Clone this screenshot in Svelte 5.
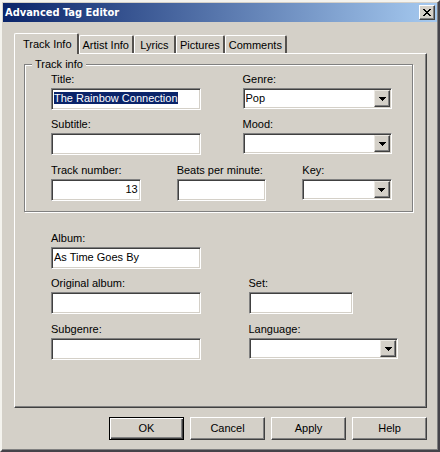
<script lang="ts">
	import { onMount } from 'svelte';

	const tabs = ['Track Info', 'Artist Info', 'Lyrics', 'Pictures', 'Comments'];

	let activeTab = $state('Track Info');
	let title = $state('The Rainbow Connection');
	let subtitle = $state('');
	let genre = $state('Pop');
	let mood = $state('');
	let trackNumber = $state('13');
	let bpm = $state('');
	let key = $state('');
	let album = $state('As Time Goes By');
	let originalAlbum = $state('');
	let set = $state('');
	let subgenre = $state('');
	let language = $state('');

	let titleInput: HTMLInputElement;

	onMount(() => {
		titleInput.focus();
		titleInput.select();
	});
</script>

{#snippet arrow()}
	<span class="arrow" aria-hidden="true">
		<svg width="7" height="4" viewBox="0 0 7 4" shape-rendering="crispEdges">
			<path d="M0 0h7v1h-1v1h-1v1h-1v1h-1v-1h-1v-1h-1v-1h-1z" />
		</svg>
	</span>
{/snippet}

<div class="window" role="dialog" aria-labelledby="window-title">
	<header class="title-bar">
		<h1 id="window-title">Advanced Tag Editor</h1>
		<button type="button" class="close" aria-label="Close">
			<svg width="8" height="7" viewBox="0 0 8 7" shape-rendering="crispEdges">
				<path
					d="M0 0h2v1h1v1h2v-1h1v-1h2v1h-1v1h-1v1h-1v1h1v1h1v1h1v1h-2v-1h-1v-1h-2v1h-1v1h-2v-1h1v-1h1v-1h1v-1h-1v-1h-1v-1h-1z"
				/>
			</svg>
		</button>
	</header>

	<form class="content" onsubmit={(event) => event.preventDefault()}>
		<div class="tabs" role="tablist">
			{#each tabs as tab}
				<button
					type="button"
					role="tab"
					class="tab"
					class:active={tab === activeTab}
					aria-selected={tab === activeTab}
					onclick={() => (activeTab = tab)}>{tab}</button
				>
			{/each}
		</div>

		<div class="panel" role="tabpanel">
			<fieldset>
				<legend>Track info</legend>
				<div class="row halves">
					<div class="field">
						<label for="title">Title:</label>
						<input id="title" type="text" bind:value={title} bind:this={titleInput} />
					</div>
					<div class="field">
						<label for="genre">Genre:</label>
						<div class="combo">
							<select id="genre" bind:value={genre}>
								<option>Pop</option>
							</select>
							{@render arrow()}
						</div>
					</div>
				</div>
				<div class="row halves">
					<div class="field">
						<label for="subtitle">Subtitle:</label>
						<input id="subtitle" type="text" bind:value={subtitle} />
					</div>
					<div class="field">
						<label for="mood">Mood:</label>
						<div class="combo">
							<select id="mood" bind:value={mood}><option value=""></option></select>
							{@render arrow()}
						</div>
					</div>
				</div>
				<div class="row thirds">
					<div class="field">
						<label for="track">Track number:</label>
						<input id="track" class="number" type="text" bind:value={trackNumber} />
					</div>
					<div class="field">
						<label for="bpm">Beats per minute:</label>
						<input id="bpm" class="number" type="text" bind:value={bpm} />
					</div>
					<div class="field">
						<label for="key">Key:</label>
						<div class="combo">
							<select id="key" bind:value={key}><option value=""></option></select>
							{@render arrow()}
						</div>
					</div>
				</div>
			</fieldset>

			<div class="album">
				<div class="row wide">
					<div class="field">
						<label for="album">Album:</label>
						<input id="album" type="text" bind:value={album} />
					</div>
				</div>
				<div class="row wide">
					<div class="field">
						<label for="original-album">Original album:</label>
						<input id="original-album" type="text" bind:value={originalAlbum} />
					</div>
					<div class="field short">
						<label for="set">Set:</label>
						<input id="set" type="text" bind:value={set} />
					</div>
				</div>
				<div class="row wide">
					<div class="field">
						<label for="subgenre">Subgenre:</label>
						<input id="subgenre" type="text" bind:value={subgenre} />
					</div>
					<div class="field">
						<label for="language">Language:</label>
						<div class="combo">
							<select id="language" bind:value={language}><option value=""></option></select>
							{@render arrow()}
						</div>
					</div>
				</div>
			</div>
		</div>

		<div class="actions">
			<button type="submit" class="action default">OK</button>
			<button type="button" class="action">Cancel</button>
			<button type="button" class="action">Apply</button>
			<button type="button" class="action">Help</button>
		</div>
	</form>
</div>

<style>
	:global(body) {
		background-color: #d4d0c8;
	}

	.window,
	.window * {
		box-sizing: border-box;
	}

	.window {
		min-height: 100vh;
		padding: 1px;
		border: 2px solid;
		border-color: #f4f3ee #45434a #45434a #f4f3ee;
		background-color: #d4d0c8;
		box-shadow: inset -1px -1px #808080;
		color: #000;
		font-family: 'Liberation Sans', Arial, sans-serif;
		font-size: 11px;
		line-height: 13px;
	}

	button,
	input,
	select {
		margin: 0;
		border-radius: 0;
		color: inherit;
		font: inherit;
		outline: none;
	}

	.title-bar {
		display: flex;
		align-items: center;
		justify-content: space-between;
		height: 19px;
		padding: 0 2px;
		background: linear-gradient(to right, #0a246a, #a6caf0);
	}

	h1 {
		margin: 0;
		color: #fff;
		font-family: 'DejaVu Sans Condensed', Tahoma, sans-serif;
		font-size: 11px;
		font-weight: 700;
	}

	.close {
		display: flex;
		align-items: center;
		justify-content: center;
		width: 16px;
		height: 15px;
		padding: 0;
		border: 1px solid;
		border-color: #fff #404040 #404040 #fff;
		background-color: #d4d0c8;
		box-shadow: inset -1px -1px #808080;
	}

	.content {
		padding: 11px 10px 8px 11px;
	}

	.tabs {
		display: flex;
		align-items: flex-end;
	}

	.tab {
		min-width: 42px;
		height: 18px;
		padding: 2px 3px 0;
		border: 1px solid #fff;
		border-right: 2px solid #55524f;
		border-bottom: 0;
		border-radius: 2px 2px 0 0;
		background-color: #d4d0c8;
	}

	.tab.active {
		position: relative;
		height: 21px;
		margin-bottom: -1px;
		padding: 0 5px 0 8px;
	}

	.panel {
		padding: 4px 13px 47px 9px;
		border: 1px solid;
		border-color: #fff #404040 #404040 #fff;
		box-shadow: inset -1px -1px #808080;
	}

	fieldset {
		min-width: 0;
		margin: 0;
		padding: 2px 20px 10px 26px;
		border: 1px solid #808080;
		box-shadow:
			1px 1px #fff,
			inset 1px 1px #fff;
	}

	legend {
		margin-left: -19px;
		padding: 0 3px;
		background-color: #d4d0c8;
	}

	.row {
		display: grid;
		align-items: start;
		margin-bottom: 8px;
	}

	.row:nth-last-child(2) {
		margin-bottom: 9px;
	}

	.row:last-child {
		margin-bottom: 0;
	}

	.halves {
		grid-template-columns: 150fr 150fr;
		column-gap: 42px;
	}

	.thirds {
		grid-template-columns: 1fr 1fr 1fr;
		column-gap: 36px;
	}

	.wide {
		grid-template-columns: 150fr 150fr;
		column-gap: 48px;
	}

	.album {
		padding: 20px 15px 0 27px;
	}

	.field {
		display: flex;
		flex-direction: column;
		gap: 2px;
		min-width: 0;
	}

	.short {
		width: 70%;
	}

	input,
	select {
		display: block;
		width: 100%;
		border: 1px solid;
		border-color: #808080 #fff #fff #808080;
		background-color: #fff;
		box-shadow:
			inset 1px 1px #404040,
			inset -1px -1px #d4d0c8;
	}

	input {
		height: 22px;
		padding: 2px 2px 5px;
	}

	input::selection {
		background-color: #0a246a;
		color: #fff;
	}

	.number {
		text-align: right;
	}

	.combo {
		position: relative;
	}

	select {
		height: 21px;
		padding: 0 18px 1px 2px;
		appearance: none;
	}

	.arrow {
		position: absolute;
		top: 2px;
		right: 2px;
		bottom: 2px;
		display: flex;
		align-items: center;
		justify-content: center;
		width: 16px;
		border: 1px solid;
		border-color: #ece9e3 #404040 #404040 #ece9e3;
		background-color: #d4d0c8;
		box-shadow: inset -1px -1px #808080;
		pointer-events: none;
	}

	.actions {
		display: flex;
		justify-content: flex-end;
		gap: 6px;
		margin-top: 9px;
	}

	.action {
		width: 75px;
		height: 23px;
		padding: 0;
		border: 1px solid;
		border-color: #fff #404040 #404040 #fff;
		background-color: #d4d0c8;
		box-shadow: inset -1px -1px #808080;
	}

	.default {
		border-color: #000;
		box-shadow:
			inset 1px 1px #fff,
			inset -1px -1px #404040,
			inset -2px -2px #808080;
	}
</style>
